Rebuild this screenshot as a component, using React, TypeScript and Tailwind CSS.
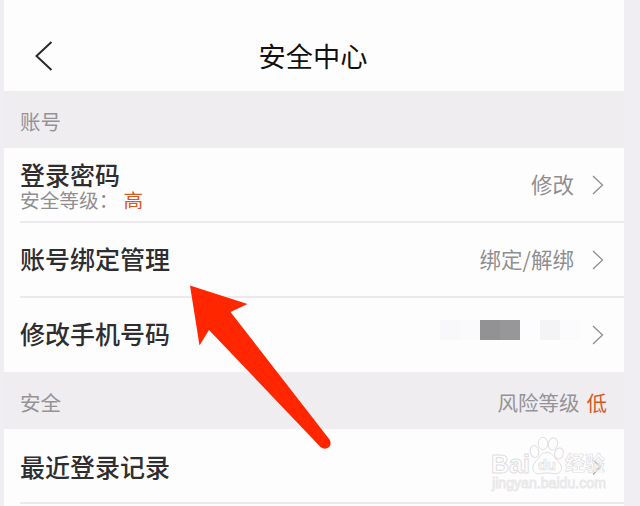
import type { ReactNode } from "react";

function Chevron() {
  return (
    <svg width="12" height="20" viewBox="0 0 12 20" fill="none" className="shrink-0">
      <path d="M1 1L10.5 10L1 19" stroke="#8f8f91" strokeWidth="1.3" />
    </svg>
  );
}

type RowProps = {
  title: string;
  note?: ReactNode;
  children?: ReactNode;
};

function Row({ title, note, children }: RowProps) {
  return (
    <div className="flex min-h-0 flex-1 items-center justify-between pr-5 pl-4">
      <div className={note ? "pt-1 text-[#2e2e30]" : "pb-1 text-[#2e2e30]"}>
        <div className="text-[25px] leading-[26px] font-medium">{title}</div>
        {note}
      </div>
      <div className="flex items-center gap-[18px] text-[21.5px] leading-6 text-[#8f8f91]">
        <div className="pb-0.5">{children}</div>
        <Chevron />
      </div>
    </div>
  );
}

function Divider() {
  return <div className="ml-4 h-0.5 shrink-0 bg-[#ebe9ec]" />;
}

function SectionHeader({ label, children }: { label: string; children?: ReactNode }) {
  return (
    <div className="flex h-[57.5px] shrink-0 items-center justify-between bg-[#efedf0] pt-[3px] pr-[17px] pl-4 text-[20.5px] leading-6 text-[#949396]">
      <span>{label}</span>
      {children}
    </div>
  );
}

// Hidden digits of the phone number
function MaskedNumber() {
  return (
    <div className="-mr-[6px] mb-2 flex h-5">
      <div className="w-5 bg-[#f8f7f9]" />
      <div className="w-5 bg-[#faf9fb]" />
      <div className="w-5 bg-[#929193]" />
      <div className="w-5 bg-[#979698]" />
      <div className="w-5 bg-[#fdfcfe]" />
      <div className="w-5 bg-[#f4f3f5]" />
      <div className="w-5 bg-[#fbfafc]" />
    </div>
  );
}

function Arrow() {
  return (
    <svg
      width="145"
      height="170"
      viewBox="0 0 145 170"
      className="pointer-events-none absolute top-[284px] left-[188px]"
    >
      <path
        d="M2 1.5L59.5 20L42.5 28L141.5 155.500Q144 160 141 163Q137 166.500 132.500 163L21 46L11.500 61.500Z"
        fill="#ff2600"
      />
    </svg>
  );
}

function Watermark() {
  return (
    <svg
      width="124"
      height="68"
      viewBox="0 0 124 68"
      className="pointer-events-none absolute top-[434px] left-[488px]"
      fill="#fefdfe"
      stroke="#dfdee0"
      strokeWidth="1"
      fontFamily="'Liberation Sans', 'Noto Sans CJK SC', sans-serif"
    >
      <path d="M105 26L112.500 32.500L105 40.500" fill="none" stroke="#a3a2a4" strokeWidth="1.200" />
      <text x="3" y="39" fontSize="26" fontWeight="700" textLength="39" lengthAdjust="spacingAndGlyphs">
        Bai
      </text>
      <ellipse cx="46.500" cy="17.500" rx="4.300" ry="6" transform="rotate(-12 46.500 17.500)" />
      <ellipse cx="55" cy="9.500" rx="4.800" ry="6.200" />
      <ellipse cx="65" cy="10" rx="4.600" ry="6.200" transform="rotate(12 65 10)" />
      <ellipse cx="71" cy="19.500" rx="4.300" ry="5.600" transform="rotate(15 71 19.500)" />
      <path d="M59 18.500C54 18.500 52 22 49.500 25.500C46 29 44.500 31 45 35C45.500 39 49 40.500 53 39.500C57 38.700 61 38.700 65 39.500C70 40.500 73.500 38 73.500 34C73.500 30 70.500 28 68 25C65.500 21.500 63.500 18.500 59 18.500Z" />
      <text x="50" y="36" fontSize="14" fontWeight="700" strokeWidth="0.700" textLength="18" lengthAdjust="spacingAndGlyphs">
        du
      </text>
      <text x="77" y="37" fontSize="20" fontWeight="700" fillOpacity="0.600" strokeWidth="0.700" fontFamily="'Noto Sans CJK SC', sans-serif">
        经验
      </text>
      <text x="4" y="54" fontSize="14" stroke="#e9e8ea" strokeWidth="1" textLength="114" lengthAdjust="spacingAndGlyphs">
        jingyan.baidu.com
      </text>
    </svg>
  );
}

export default function App() {
  return (
    <div className="relative flex h-[506px] w-[640px] overflow-hidden bg-[#f0eef2] pr-4 pl-1 font-['Noto_Sans_CJK_SC',sans-serif]">
      <main className="flex w-full flex-col bg-[#fefdfe]">
        <header className="grid h-[90.5px] shrink-0 grid-cols-[1fr_auto_1fr] items-center pt-[21px] pr-[2px]">
          <svg width="18" height="30" viewBox="0 0 18 30" fill="none" className="ml-[31px]">
            <path d="M16.500 1L1.500 15L16.500 29" stroke="#2a2a2c" strokeWidth="2" />
          </svg>
          <h1 className="pb-0.5 text-[27.2px] leading-8 text-[#111]">安全中心</h1>
        </header>

        <SectionHeader label="账号" />

        <div className="flex h-[223.5px] shrink-0 flex-col">
          <Row
            title="登录密码"
            note={
              <div className="flex gap-[5px] text-[19.7px] leading-[26px] text-[#8f8f91]">
                <span>安全等级：</span>
                <span className="text-[#d4581f]">高</span>
              </div>
            }
          >
            修改
          </Row>
          <Divider />
          <Row title="账号绑定管理">绑定/解绑</Row>
          <Divider />
          <Row title="修改手机号码">
            <MaskedNumber />
          </Row>
        </div>

        <SectionHeader label="安全">
          <span className="flex gap-[7px]">
            <span>风险等级</span>
            <span className="text-[#d4581f]">低</span>
          </span>
        </SectionHeader>

        <div className="flex h-[75px] shrink-0 flex-col">
          <div className="flex flex-1 items-center pl-4 text-[25px] leading-[26px] font-medium text-[#2e2e30]">
            最近登录记录
          </div>
          <Divider />
        </div>
      </main>

      <Arrow />
      <Watermark />
    </div>
  );
}
